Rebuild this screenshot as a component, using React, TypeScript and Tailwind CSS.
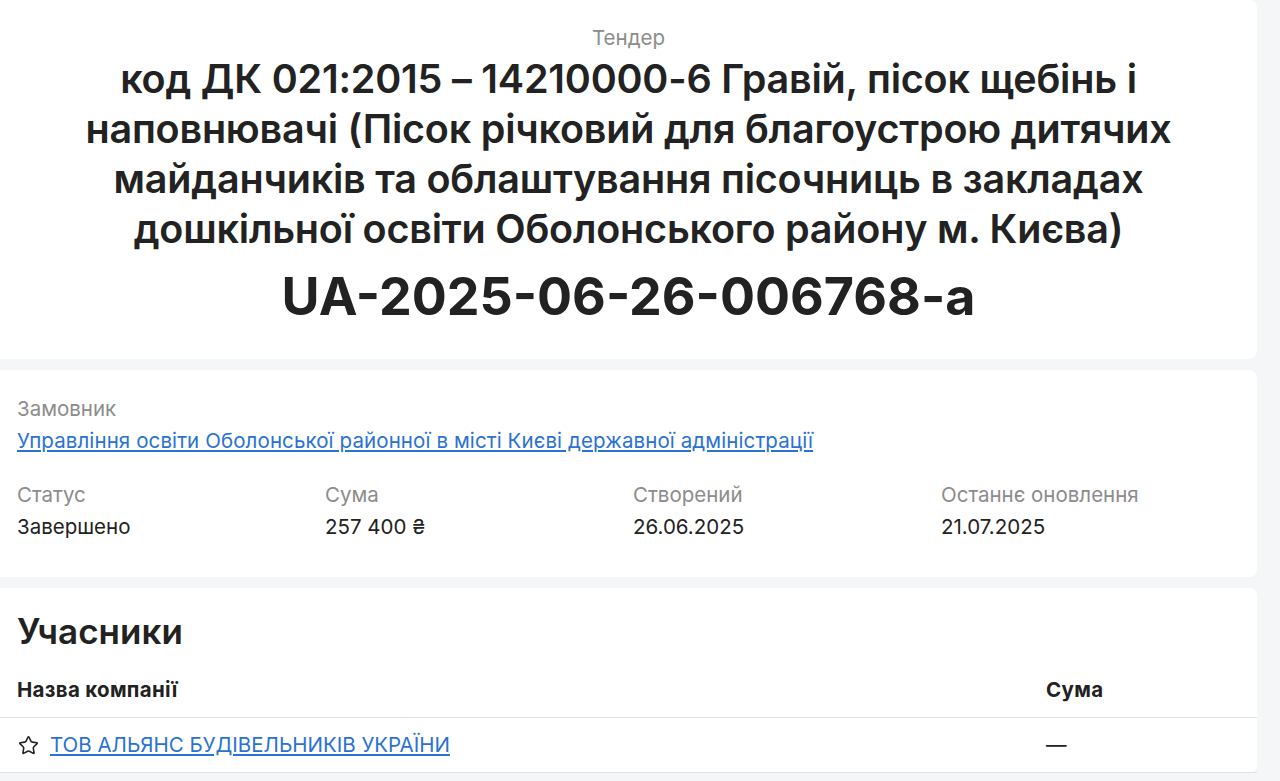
import { Star } from "lucide-react";

const stats = [
  { label: "Статус", value: "Завершено" },
  { label: "Сума", value: "257 400 ₴" },
  { label: "Створений", value: "26.06.2025" },
  { label: "Останнє оновлення", value: "21.07.2025" },
];

export default function App() {
  return (
    <div className="min-h-screen bg-[#f4f6f8] pr-[23px] font-['Inter',sans-serif] text-[#222]">
      <div className="flex flex-col gap-[11px]">
        {/* header */}
        <section className="rounded-r-lg bg-white pb-[32px] pt-[25px] text-center">
          <div className="text-[20.5px] leading-[26px] text-[#8c8c8c]">Тендер</div>
          <h1 className="mx-auto mt-[3px] max-w-[1120px] text-[39.5px] font-semibold leading-[50px] tracking-[-0.2px]">
            код ДК 021:2015 – 14210000-6 Гравій, пісок щебінь і наповнювачі (Пісок річковий для благоустрою дитячих
            майданчиків та облаштування пісочниць в закладах дошкільної освіти Оболонського району м. Києва)
          </h1>
          <div className="mt-[13px] text-[52px] font-bold leading-[60px]">UA-2025-06-26-006768-a</div>
        </section>

        {/* customer */}
        <section className="rounded-r-lg bg-white px-[17px] pb-[37px] pt-[26px]">
          <div className="text-[20.5px] leading-[26px] text-[#8c8c8c]">Замовник</div>
          <a href="#" className="mt-[6px] block text-[20.5px] leading-[26px] tracking-[0.1px] text-[#2a72d3] underline underline-offset-2">
            Управління освіти Оболонської районної в місті Києві державної адміністрації
          </a>
          <div className="mt-[28px] grid grid-cols-[repeat(4,308px)]">
            {stats.map((s) => (
              <div key={s.label}>
                <div className="text-[20.5px] leading-[26px] text-[#8c8c8c]">{s.label}</div>
                <div className="mt-[6px] text-[20.5px] leading-[26px]">{s.value}</div>
              </div>
            ))}
          </div>
        </section>

        {/* participants */}
        <section className="rounded-r-lg bg-white pt-[21px]">
          <h2 className="px-[17px] text-[35px] font-semibold leading-[44px]">Учасники</h2>
          <table className="mt-[24px] w-full border-collapse text-left text-[20.5px] leading-[26px]">
            <thead>
              <tr className="border-b border-[#e2e2e2]">
                <th className="px-[17px] pb-[14px] font-bold tracking-[0.3px]">Назва компанії</th>
                <th className="w-[211px] pb-[14px] font-bold tracking-[0.3px]">Сума</th>
              </tr>
            </thead>
            <tbody>
              <tr className="border-b border-[#e2e2e2]">
                <td className="px-[17px] pb-[14px] pt-[14px]">
                  <div className="flex items-center gap-[11px]">
                    <Star size={21} strokeWidth={1.8} className="ml-[1px] text-[#222]" />
                    <a href="#" className="text-[#2a72d3] underline underline-offset-2">
                      ТОВ АЛЬЯНС БУДІВЕЛЬНИКІВ УКРАЇНИ
                    </a>
                  </div>
                </td>
                <td className="pb-[14px] pt-[14px]">—</td>
              </tr>
            </tbody>
          </table>
        </section>
      </div>
    </div>
  );
}
